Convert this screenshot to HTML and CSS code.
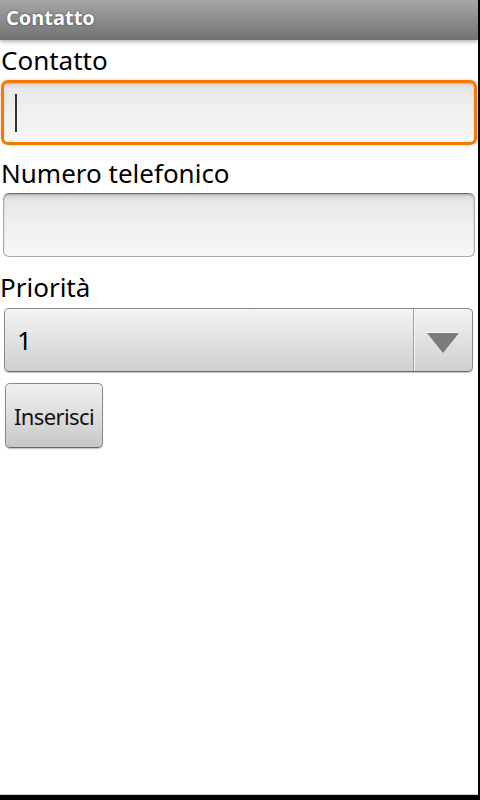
FILE: index.html
```html
<!DOCTYPE html>
<html lang="it">
<head>
    <meta charset="UTF-8">
    <meta name="viewport" content="width=device-width, initial-scale=1.0">
    <title>Contatto</title>
    <link rel="stylesheet" href="styles.css">
</head>
<body>
    <div class="screen">
        <div class="titlebar">Contatto</div>

        <form class="content" name="contactForm">
            <label class="label label-first" for="contatto">Contatto</label>
            <div class="field field-focused" id="contatto">
                <span class="cursor"></span>
            </div>

            <label class="label" for="telefono">Numero telefonico</label>
            <div class="field" id="telefono"></div>

            <label class="label label-third" for="priorita">Priorità</label>
            <div class="spinner" id="priorita">
                <span class="spinner-value">1</span>
                <span class="spinner-arrow"><span class="triangle"></span></span>
            </div>

            <button type="button" class="button">Inserisci</button>
        </form>
    </div>
</body>
</html>
```

FILE: styles.css
```css
body {
    margin: 0;
    padding: 0;
    background-color: #000;
    font-family: "Noto Sans", "Open Sans", sans-serif;
}

.screen {
    width: 478px;
    height: 794px;
    background-color: #fff;
    border-bottom: 1px solid #d4d4d4;
    overflow: hidden;
}

.titlebar {
    height: 40px;
    box-sizing: border-box;
    padding: 4px 0 0 6px;
    background: linear-gradient(#a6a6a6, #8c8c8c 50%, #727272);
    box-shadow: 0 2px 4px rgba(0, 0, 0, 0.3);
    color: #fff;
    font-size: 20px;
    font-weight: bold;
    line-height: 28px;
    text-shadow: 0 0 2px #333;
}

.content {
    display: flex;
    flex-direction: column;
    align-items: flex-start;
}

.label {
    display: block;
    margin-left: 1px;
    font-size: 26px;
    line-height: 34px;
    color: #000;
}

.label-first {
    margin-top: 3px;
}

.label-third {
    margin-left: 0;
}

.field {
    box-sizing: border-box;
    width: 472px;
    height: 64px;
    margin: 3px 0 13px 3px;
    border: 1px solid #a9a9a9;
    border-top-color: #6e6e6e;
    border-radius: 6px;
    background: linear-gradient(#d2d2d2, #e6e6e6 10%, #f0f0f0 50%, #f8f8f8);
    box-shadow: inset 0 1px 2px rgba(0, 0, 0, 0.2);
}

.field-focused {
    width: 476px;
    height: 65px;
    margin: 3px 0 11px 1px;
    border: 3px solid #f57a05;
    border-radius: 7px;
    background: linear-gradient(#dadada, #e8e8e8 10%, #f0f0f0 50%, #f7f7f7);
    box-shadow: 0 0 2px #fba55a, inset 0 1px 2px rgba(0, 0, 0, 0.15);
    padding: 11px 0 0 11px;
}

.cursor {
    display: block;
    width: 2px;
    height: 38px;
    background-color: #333;
}

.spinner {
    box-sizing: border-box;
    width: 469px;
    height: 64px;
    margin: 4px 0 0 4px;
    display: flex;
    border: 1px solid #8c8c8c;
    border-bottom-color: #6a6a6a;
    border-radius: 5px;
    background: linear-gradient(#f3f3f3, #e2e2e2 50%, #cfcfcf);
    box-shadow: 0 1px 1px rgba(0, 0, 0, 0.25);
}

.spinner-value {
    flex: 1;
    padding-left: 12px;
    font-size: 26px;
    line-height: 62px;
    color: #000;
}

.spinner-arrow {
    width: 59px;
    display: flex;
    justify-content: center;
    padding-top: 24px;
    box-sizing: border-box;
    border-left: 1px solid #a2a2a2;
    box-shadow: inset 1px 0 0 #f5f5f5;
}

.triangle {
    width: 0;
    height: 0;
    border-left: 16px solid transparent;
    border-right: 16px solid transparent;
    border-top: 20px solid #7c7c7c;
    filter: drop-shadow(0 -1px 0 #f8f8f8);
}

.button {
    box-sizing: border-box;
    width: 98px;
    height: 65px;
    margin: 11px 0 0 5px;
    padding: 0;
    border: 1px solid #8a8a8a;
    border-bottom-color: #666;
    border-radius: 5px;
    background: linear-gradient(#f0f0f0, #dedede 50%, #c6c6c6);
    box-shadow: 0 1px 1px rgba(0, 0, 0, 0.25);
    color: #111;
    font-family: "Noto Sans", "Open Sans", sans-serif;
    font-size: 22px;
    letter-spacing: -0.6px;
    cursor: pointer;
}
```
